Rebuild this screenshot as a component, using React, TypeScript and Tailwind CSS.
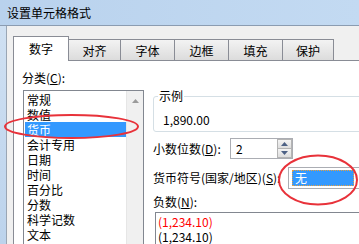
import React from "react";

const tabs = [
  { label: "数字", w: "w-[56px]", sel: true },
  { label: "对齐", w: "w-[53px]" },
  { label: "字体", w: "w-[55px]" },
  { label: "边框", w: "w-[55px]" },
  { label: "填充", w: "w-[55px]" },
  { label: "保护", w: "w-[52px]" },
];

const cats = ["常规", "数值", "货币", "会计专用", "日期", "时间", "百分比", "分数", "科学记数", "文本", "特殊"];

export default function App() {
  return (
    <div className="relative w-[359px] h-[244px] overflow-hidden bg-[#f0f0f0] text-[12px] text-black font-['Noto_Sans_CJK_SC','Noto_Sans',sans-serif] leading-[16px]">
      {/* title bar */}
      <div className="h-[26px] border-b border-[#8b9cb1] bg-gradient-to-r from-[#b9d2ed] to-[#c3daf2] flex items-center pl-[7px]">
        <span className="text-[12px]">设置单元格格式</span>
      </div>
      <div className="flex h-[218px]">
        <div className="w-[7px] shrink-0 bg-gradient-to-b from-[#cfe0f2] to-[#bcd3ec] border-r border-[#9aa6b4]" />
        <div className="flex-1 min-w-0 flex flex-col pl-[6px] pt-[9px]">
          {/* tabs */}
          <div className="flex items-end h-[25px] relative z-10 shrink-0">
            {tabs.map((t) =>
              t.sel ? (
                <div
                  key={t.label}
                  className={`${t.w} shrink-0 h-[25px] -mb-[1px] bg-white border border-b-0 border-[#898c95] flex items-center justify-center pb-[1px]`}
                >
                  {t.label}
                </div>
              ) : (
                <div
                  key={t.label}
                  className={`${t.w} shrink-0 h-[21px] -ml-[1px] border border-b-0 border-[#898c95] bg-gradient-to-b from-[#f3f3f3] to-[#dcdcdc] flex items-center justify-center pt-[1px]`}
                >
                  {t.label}
                </div>
              )
            )}
          </div>
          {/* panel */}
          <div className="flex-1 min-h-0 bg-white border-l border-t border-[#898c95] flex overflow-hidden">
            {/* left column */}
            <div className="w-[139px] shrink-0 flex flex-col pt-[9px]">
              <div className="pl-[8px]">
                分类(<span className="underline">C</span>):
              </div>
              <div className="ml-[9px] mt-[4px] w-[121px] flex-1 border border-b-0 border-[#828790] flex overflow-hidden">
                <div className="flex-1 flex flex-col pt-[1px] pl-[1px]">
                  {cats.map((c) => (
                    <div
                      key={c}
                      className={`h-[15px] shrink-0 leading-[15px] pl-[2px] ${
                        c === "货币" ? "bg-[#3399ff] text-white" : ""
                      }`}
                    >
                      {c}
                    </div>
                  ))}
                </div>
                <div className="w-[17px] shrink-0 bg-[#f0f0f0] border-l border-[#e6e6e6] flex justify-center pt-[8px]">
                  <svg width="7" height="4" viewBox="0 0 7 4">
                    <path d="M3.5 0 L7 4 L0 4 Z" fill="#9a9a9a" />
                  </svg>
                </div>
              </div>
            </div>
            {/* right column */}
            <div className="w-[260px] shrink-0 flex flex-col pt-[35px]">
              <div className="relative h-[38px] w-[260px] border border-[#d5dfe5] rounded-[3px] pl-[9px] pt-[15px]">
                <span className="absolute -top-[9px] left-[4px] bg-white px-[1px]">示例</span>
                <span>1,890.00</span>
              </div>
              <div className="flex items-center mt-[6px]">
                <div className="w-[77px] shrink-0 whitespace-nowrap">
                  小数位数(<span className="underline">D</span>):
                </div>
                <div className="w-[63px] shrink-0 h-[21px] border border-[#abadb3] flex">
                  <div className="flex-1 pl-[5px] leading-[19px]">2</div>
                  <div className="w-[15px] flex flex-col">
                    <div className="flex-1 border border-[#b4b4b4] bg-gradient-to-b from-[#f4f4f4] to-[#dedede] flex items-center justify-center">
                      <svg width="7" height="4" viewBox="0 0 7 4">
                        <path d="M3.5 0 L7 4 L0 4 Z" fill="#4d6185" />
                      </svg>
                    </div>
                    <div className="flex-1 border border-t-0 border-[#b4b4b4] bg-gradient-to-b from-[#f4f4f4] to-[#dedede] flex items-center justify-center">
                      <svg width="7" height="4" viewBox="0 0 7 4">
                        <path d="M0 0 L7 0 L3.5 4 Z" fill="#4d6185" />
                      </svg>
                    </div>
                  </div>
                </div>
              </div>
              <div className="flex items-center mt-[8px]">
                <div className="w-[135px] shrink-0 whitespace-nowrap">
                  货币符号(国家/地区)(<span className="underline">S</span>):
                </div>
                <div className="w-[100px] shrink-0 h-[22px] border border-[#abadb3] py-[2px] pl-[3px]">
                  <div className="w-[62px] h-full bg-[#3399ff] border border-dotted border-[#e8a040] text-white pl-[2px] leading-[14px]">
                    无
                  </div>
                </div>
              </div>
              <div className="mt-[5px]">
                负数(<span className="underline">N</span>):
              </div>
              <div className="ml-[2px] mt-[2px] flex-1 w-[250px] border border-b-0 border-[#828790] pt-[1px] pl-[2px]">
                <div className="h-[15px] leading-[15px] text-[#ff0000]">(1,234.10)</div>
                <div className="h-[15px] leading-[15px]">(1,234.10)</div>
              </div>
            </div>
          </div>
        </div>
      </div>
      {/* red annotation ellipses */}
      <svg className="absolute inset-0 pointer-events-none" width="359" height="244">
        <ellipse cx="71.5" cy="126.5" rx="66.5" ry="11.5" fill="none" stroke="#e8323a" strokeWidth="2" />
        <ellipse cx="318" cy="180" rx="39" ry="24.5" fill="none" stroke="#e8323a" strokeWidth="2" />
      </svg>
    </div>
  );
}
